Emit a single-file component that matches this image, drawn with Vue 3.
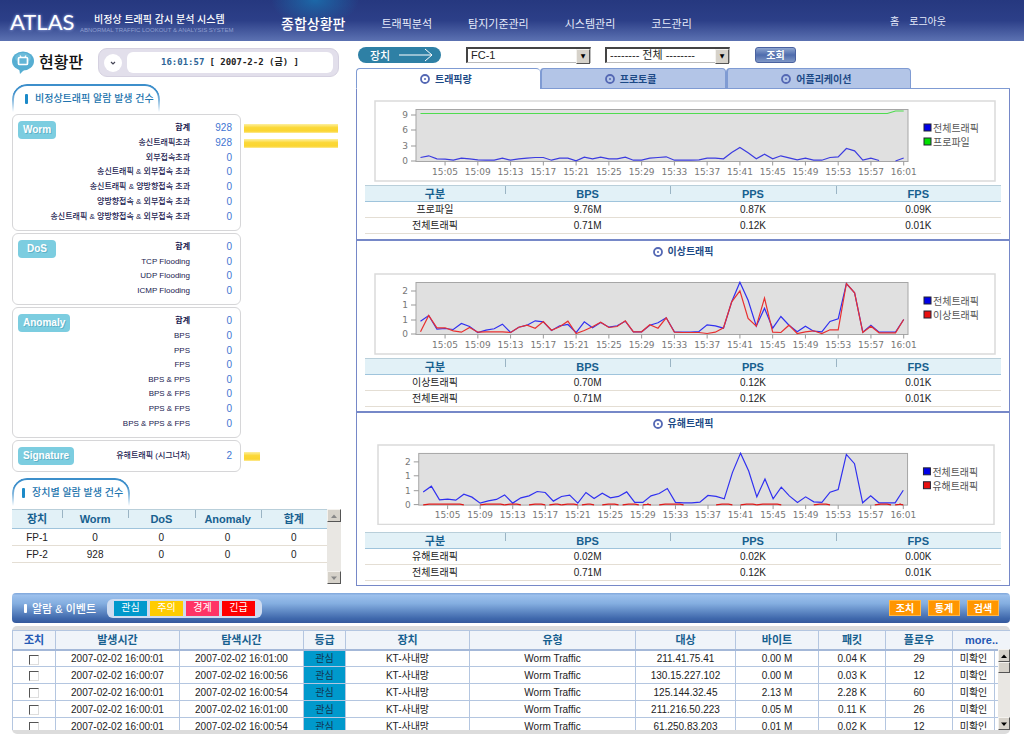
<script setup>
import { ref } from 'vue'

const menu = ['트래픽분석', '탐지기준관리', '시스템관리', '코드관리']
const tabs = ['트래픽량', '프로토콜', '어플리케이션']
const activeTab = ref(0)
const device = ref('FC-1')
const scope = ref('all')

const groups = [
  {
    name: 'Worm',
    size: 'seven',
    rows: [
      ['합계', 928],
      ['송신트래픽초과', 928],
      ['외부접속초과', 0],
      ['송신트래픽 & 외부접속 초과', 0],
      ['송신트래픽 & 양방향접속 초과', 0],
      ['양방향접속 & 외부접속 초과', 0],
      ['송신트래픽 & 양방향접속 & 외부접속 초과', 0]
    ]
  },
  {
    name: 'DoS',
    size: 'four',
    rows: [['합계', 0], ['TCP Flooding', 0], ['UDP Flooding', 0], ['ICMP Flooding', 0]]
  },
  {
    name: 'Anomaly',
    size: 'eight',
    rows: [
      ['합계', 0], ['BPS', 0], ['PPS', 0], ['FPS', 0],
      ['BPS & PPS', 0], ['BPS & FPS', 0], ['PPS & FPS', 0], ['BPS & PPS & FPS', 0]
    ]
  },
  { name: 'Signature', size: 'one', rows: [['유해트래픽 (시그너처)', 2]] }
]
const barWidth = (n) => (n === 0 ? 0 : Math.min(97, 14 + n)) + '%'

const deviceRows = [['FP-1', 0, 0, 0, 0], ['FP-2', 928, 0, 0, 0]]

// Plot area inside the chart's own coordinate system
const X0 = 46.5
const STEP = 8.19
const BASE = 60.5
const toPoints = (values) => values
  .map((h, i) => (h === null ? null : `${(X0 + i * STEP).toFixed(1)},${(BASE - h / 3).toFixed(1)}`))
  .filter(Boolean)
  .join(' ')

const total = [37, 54, 13, 15, 12, 30, 21, 3, 10, 14, 28, 3, 19, 25, 38, 35, 9, 23, 27, 3, 35, 17, 33, 19, 23, 37, 5, 5, 25, 32, 47, 5, 4, 4, 6, 26, 23, 16, 95, 154, 100, 22, 76, 16, 51, 25, 5, 22, 7, 5, 36, 44, 150, 122, 4, 25, 4, 4, 4, 42]
const abnormal = [5, 54, 17, 17, 8, 4, 18, 4, 5, 5, 5, 3, 19, 25, 16, 36, 10, 20, 37, 0, 9, 20, 34, 18, 21, 38, 5, 5, 26, 16, 47, 4, 3, 3, 3, 0, 4, 17, 95, 128, 45, 22, 106, 4, 3, 25, 0, 5, 8, 0, 11, 11, 150, 122, 3, 22, 2, 2, 2, 42]
const low = [9, 14, 5, 4, 1, 7, 5, 2, 1, 1, 7, 1, 5, 7, 9, 9, 1, 7, 7, -1, 10, 5, 10, 5, 5, 10, 1, 1, 7, 9, 11, 1, 1, 1, 2, 7, 7, 5, 24, 39, 23, 5, 19, 5, 14, 8, 2, 7, 1, 1, 9, 11, 36, 29, 1, 7, 0]
const harmfulSpans = [[0, 5], [7, 10], [10, 12], [13, 15], [15.5, 17], [17, 19], [19.5, 21], [22, 24], [24.5, 26.5], [27, 28], [29, 32], [36, 38], [39, 41], [41, 44], [48, 50], [55.5, 57.5], [58, 59]]
const profileLine = `46.5,13.5 ${(X0 + 57 * STEP).toFixed(1)},13.5 ${(X0 + 58 * STEP).toFixed(1)},11 ${(X0 + 59 * STEP).toFixed(1)},11`
const spanPoints = ([a, b]) => {
  const x1 = X0 + a * STEP
  const x2 = X0 + b * STEP
  return `${x1.toFixed(1)},61.2 ${(x1 + 6).toFixed(1)},60.5 ${(x2 - 4).toFixed(1)},60.5 ${x2.toFixed(1)},61.2`
}

const xTicks = ['15:05', '15:09', '15:13', '15:17', '15:21', '15:25', '15:29', '15:33', '15:37', '15:41', '15:45', '15:49', '15:53', '15:57', '16:01']
const tickX = (i) => X0 + (3 + i * 4) * STEP

const fine = [{ t: '2', y: 18 }, { t: '1', y: 32 }, { t: '1', y: 47 }, { t: '0', y: 61 }]
const charts = [
  {
    title: '',
    second: '프로파일', color: '#00e000',
    yTicks: [{ t: '9', y: 15 }, { t: '6', y: 30 }, { t: '3', y: 46 }, { t: '0', y: 61 }],
    lines: [
      { c: '#4fdc4f', p: profileLine },
      { c: '#3c3ce0', p: toPoints(low) },
      { c: '#3c3ce0', p: `${(X0 + 58 * STEP).toFixed(1)},61 ${(X0 + 59 * STEP).toFixed(1)},58` }
    ],
    rows: [['프로파일', '9.76M', '0.87K', '0.09K'], ['전체트래픽', '0.71M', '0.12K', '0.01K']]
  },
  {
    title: '이상트래픽',
    second: '이상트래픽', color: '#e81010',
    yTicks: fine,
    lines: [{ c: '#3030f0', p: toPoints(total) }, { c: '#e83030', p: toPoints(abnormal) }],
    rows: [['이상트래픽', '0.70M', '0.12K', '0.01K'], ['전체트래픽', '0.71M', '0.12K', '0.01K']]
  },
  {
    title: '유해트래픽',
    second: '유해트래픽', color: '#e81010',
    yTicks: fine,
    lines: [{ c: '#3030f0', p: toPoints(total) }, ...harmfulSpans.map((s) => ({ c: '#e01818', p: spanPoints(s) }))],
    rows: [['유해트래픽', '0.02M', '0.02K', '0.00K'], ['전체트래픽', '0.71M', '0.12K', '0.01K']]
  }
]

const levels = [
  { t: '관심', k: 'notice' }, { t: '주의', k: 'caution' }, { t: '경계', k: 'alert' }, { t: '긴급', k: 'urgent' }
]
const eventCols = [43, 124, 124, 42, 124, 166, 100, 83, 67, 67, 42, 16]
const eventHeads = ['조치', '발생시간', '탐색시간', '등급', '장치', '유형', '대상', '바이트', '패킷', '플로우']
const events = [
  ['2007-02-02 16:00:01', '2007-02-02 16:01:00', '211.41.75.41', '0.00 M', '0.04 K', 29],
  ['2007-02-02 16:00:07', '2007-02-02 16:00:56', '130.15.227.102', '0.00 M', '0.03 K', 12],
  ['2007-02-02 16:00:01', '2007-02-02 16:00:54', '125.144.32.45', '2.13 M', '2.28 K', 60],
  ['2007-02-02 16:00:01', '2007-02-02 16:01:00', '211.216.50.223', '0.05 M', '0.11 K', 26],
  ['2007-02-02 16:00:01', '2007-02-02 16:00:54', '61.250.83.203', '0.01 M', '0.02 K', 12]
]
</script>

<template>
  <div class="page">
    <header class="top">
      <a class="logo" href="#">ATLAS</a>
      <div class="tagline">
        <p class="ko">비정상 트래픽 감시 분석 시스템</p>
        <p class="en">ABNORMAL TRAFFIC LOOKOUT &amp; ANALYSIS SYSTEM</p>
      </div>
      <nav class="menu">
        <a class="current" href="#">종합상황판</a>
        <a v-for="m in menu" :key="m" href="#">{{ m }}</a>
      </nav>
      <div class="user">
        <a href="#">홈</a>
        <a href="#">로그아웃</a>
      </div>
    </header>

    <main class="main">
      <section class="left">
        <div class="status">
          <svg class="bubble" viewBox="0 0 22 24" aria-hidden="true">
            <ellipse cx="11" cy="10" rx="11" ry="9.5" fill="#56aed2" />
            <path d="M7 17 L8 23 L14 17 Z" fill="#56aed2" />
            <ellipse cx="11" cy="7" rx="8" ry="5" fill="#7cc5e0" opacity=".6" />
            <rect x="6.5" y="6.5" width="9" height="7" rx="1" fill="#63b5d6" stroke="#fff" stroke-width="1.7" />
            <path d="M8 4.500 L9 6 M14 4.500 L13 6" stroke="#fff" stroke-width="1.2" />
          </svg>
          <h1>현황판</h1>
          <div class="clock">
            <button type="button" class="round" aria-label="열기">
              <svg viewBox="0 0 8 8"><path d="M2 3 L4 5 L6 3" fill="none" stroke="#445" stroke-width="1.2" /></svg>
            </button>
            <p class="time"><b>16:01:57</b><span>[ 2007-2-2 (금) ]</span></p>
          </div>
        </div>

        <h2 class="cap"><span>비정상트래픽 알람 발생 건수</span></h2>
        <div class="groups">
          <div v-for="g in groups" :key="g.name" class="group" :class="g.size">
            <div class="box">
              <strong class="badge">{{ g.name }}</strong>
              <dl>
                <div v-for="r in g.rows" :key="r[0]">
                  <dt :class="{ sum: r[0] === '합계' }">{{ r[0] }}</dt>
                  <dd>{{ r[1] }}</dd>
                </div>
              </dl>
            </div>
            <div class="bars">
              <div v-for="r in g.rows" :key="r[0]">
                <i v-if="r[1]" :style="{ width: barWidth(r[1]) }"></i>
              </div>
            </div>
          </div>
        </div>

        <h2 class="cap second"><span>장치별 알람 발생 건수</span></h2>
        <div class="devices">
          <table class="grid device-table">
            <colgroup><col class="first"><col><col><col><col></colgroup>
            <thead>
              <tr><th>장치</th><th>Worm</th><th>DoS</th><th>Anomaly</th><th>합계</th></tr>
            </thead>
            <tbody>
              <tr v-for="r in deviceRows" :key="r[0]"><td v-for="(c, i) in r" :key="i">{{ c }}</td></tr>
            </tbody>
          </table>
          <div class="scroll">
            <button type="button" aria-label="위로"><svg viewBox="0 0 8 8"><path d="M1 6 L4 2.500 L7 6 Z" fill="#888" /></svg></button>
            <button type="button" aria-label="아래로"><svg viewBox="0 0 8 8"><path d="M1 2.500 L4 6 L7 2.500 Z" fill="#888" /></svg></button>
          </div>
        </div>
      </section>

      <section class="right">
        <form class="filter" @submit.prevent>
          <label class="pill" for="device">장치
            <svg viewBox="0 0 34 14" aria-hidden="true"><path d="M0 7 H33 M26 1 L33 7 L26 13" fill="none" stroke="#fff" /></svg>
          </label>
          <span class="drop">
            <select id="device" v-model="device"><option>FC-1</option></select>
          </span>
          <span class="drop">
            <select v-model="scope" aria-label="범위"><option value="all">-------- 전체 --------</option></select>
          </span>
          <button type="submit" class="query">조회</button>
        </form>

        <div class="tabs" role="tablist">
          <button
            v-for="(t, i) in tabs" :key="t" type="button" role="tab"
            :aria-selected="i === activeTab" :class="{ on: i === activeTab }" @click="activeTab = i"
          >
            <svg class="dot" viewBox="0 0 10 10"><circle cx="5" cy="5" r="4" fill="none" stroke="#5468b4" stroke-width="1.8" /><circle cx="5" cy="5" r="1" fill="#5468b4" /></svg>{{ t }}
          </button>
          <span class="rest"></span>
        </div>

        <div class="panel">
          <article v-for="(c, k) in charts" :key="k" :class="'part part' + k">
            <h3 v-if="c.title">
              <svg class="dot" viewBox="0 0 10 10"><circle cx="5" cy="5" r="4" fill="none" stroke="#5468b4" stroke-width="1.8" /><circle cx="5" cy="5" r="1" fill="#5468b4" /></svg>{{ c.title }}
            </h3>
            <svg class="chart" viewBox="0 0 622 82">
              <rect x="1" y="1" width="620" height="80" fill="#fff" stroke="#dadada" stroke-width="1.5" />
              <rect x="42" y="9.5" width="492" height="52" fill="#e0e0e0" stroke="#a6a6a6" />
              <g stroke="#999">
                <line v-for="(y, i) in c.yTicks" :key="i" x1="37" x2="42" :y1="y.y" :y2="y.y" />
                <line v-for="(t, i) in xTicks" :key="t" :x1="tickX(i)" :x2="tickX(i)" y1="61.5" y2="65.5" />
              </g>
              <g class="tick">
                <text v-for="(y, i) in c.yTicks" :key="i" x="34" :y="y.y + 3" text-anchor="end">{{ y.t }}</text>
                <text v-for="(t, i) in xTicks" :key="t" :x="tickX(i)" y="75" text-anchor="middle">{{ t }}</text>
              </g>
              <polyline v-for="(l, i) in c.lines" :key="i" :points="l.p" fill="none" :stroke="l.c" stroke-width="1.2" />
              <rect x="550" y="24" width="7" height="7" fill="#0000e8" stroke="#223" />
              <rect x="550" y="38" width="7" height="7" :fill="c.color" stroke="#223" />
              <g class="key">
                <text x="559" y="32">전체트래픽</text>
                <text x="559" y="46">{{ c.second }}</text>
              </g>
            </svg>
            <table class="grid stat">
              <colgroup><col class="first"><col><col><col></colgroup>
              <thead><tr><th>구분</th><th>BPS</th><th>PPS</th><th>FPS</th></tr></thead>
              <tbody>
                <tr v-for="r in c.rows" :key="r[0]"><td v-for="(v, i) in r" :key="i">{{ v }}</td></tr>
              </tbody>
            </table>
          </article>
        </div>
      </section>
    </main>

    <section class="events">
      <div class="bar">
        <h2>알람 &amp; 이벤트</h2>
        <ul>
          <li v-for="l in levels" :key="l.k" :class="l.k">{{ l.t }}</li>
        </ul>
        <div class="acts">
          <button type="button">조치</button>
          <button type="button">통계</button>
          <button type="button">검색</button>
        </div>
      </div>
      <div class="list">
        <div class="window">
          <table>
            <colgroup><col v-for="(w, i) in eventCols" :key="i" :style="{ width: w + 'px' }"></colgroup>
            <thead>
              <tr>
                <th v-for="h in eventHeads" :key="h">{{ h }}</th>
                <th colspan="2"><a href="#">more..</a></th>
              </tr>
            </thead>
            <tbody>
              <tr v-for="(e, i) in events" :key="i">
                <td><input type="checkbox" :aria-label="'조치 ' + (i + 1)"></td>
                <td>{{ e[0] }}</td>
                <td>{{ e[1] }}</td>
                <td class="level">관심</td>
                <td>KT-사내망</td>
                <td>Worm Traffic</td>
                <td>{{ e[2] }}</td>
                <td>{{ e[3] }}</td>
                <td>{{ e[4] }}</td>
                <td>{{ e[5] }}</td>
                <td>미확인</td>
                <td></td>
              </tr>
            </tbody>
          </table>
          <div class="scroll over">
            <button type="button" aria-label="위로"><svg viewBox="0 0 8 8"><path d="M1 6 L4 2.500 L7 6 Z" fill="#000" /></svg></button>
            <span class="thumb"></span>
            <button type="button" aria-label="아래로"><svg viewBox="0 0 8 8"><path d="M1 2.500 L4 6 L7 2.500 Z" fill="#000" /></svg></button>
          </div>
        </div>
      </div>
    </section>
  </div>
</template>

<style>
body { margin: 0; background: #fff; }
</style>

<style scoped>
.page {
  font-family: "Liberation Sans", "Noto Sans CJK KR", sans-serif;
  font-size: 10px;
  color: #222;
}
.page * { box-sizing: border-box; }
h1, h2, h3, p, ul, dl, dd { margin: 0; padding: 0; }
ul { list-style: none; }
a { text-decoration: none; color: inherit; }
button { font-family: inherit; padding: 0; margin: 0; cursor: pointer; }
table { border-collapse: collapse; border-spacing: 0; table-layout: fixed; width: 100%; }
th, td { padding: 0; text-align: center; white-space: nowrap; }

.top {
  display: flex;
  align-items: center;
  height: 41px;
  padding: 0 78px 0 10px;
  color: #e6ebfa;
  background:
    radial-gradient(ellipse 44px 26px at 315px 0, #1c68a8, transparent),
    linear-gradient(#26387f, #2c3f88 50%, #5c72b2);
}
.logo {
  width: 70px;
  font: 22px/24px Lato, sans-serif;
  color: #fff;
  padding-top: 3px;
  text-shadow: 0 0 3px #a9b8ee;
}
.tagline { width: 201px; white-space: nowrap; padding-top: 6px; }
.ko { padding-left: 14px; font-size: 10px; line-height: 12px; font-weight: 500; color: #fff; }
.en { font: 6px/8px "Liberation Sans", sans-serif; color: #8f9fd0; }
.menu { display: flex; align-items: center; gap: 36px; font-size: 11px; padding-top: 4px; white-space: nowrap; }
.menu .current { font-size: 14px; font-weight: 500; color: #fff; }
.user { display: flex; gap: 10px; margin-left: auto; }

.main {
  display: grid;
  grid-template-columns: 329px minmax(0, 1fr);
  column-gap: 15px;
  padding: 6px 14px 7px 12px;
}
.left { padding-top: 1px; }
.status { display: flex; align-items: center; height: 29px; }
.bubble { width: 22px; height: 24px; margin-right: 5px; }
h1 { font-size: 16px; line-height: 24px; font-weight: 500; color: #111; width: 59px; }
.clock {
  flex: 1;
  display: flex;
  align-items: center;
  gap: 5px;
  height: 29px;
  padding: 0 5px;
  margin-right: 2px;
  border-radius: 9px;
  background: #e2dfeb;
  border: 1px solid #d5d1e0;
}
.round { width: 18px; height: 18px; border: 0; border-radius: 9px; background: #fff; display: grid; place-items: center; }
.round svg { width: 8px; height: 8px; }
.time {
  flex: 1;
  display: flex;
  justify-content: center;
  gap: 5px;
  height: 21px;
  border-radius: 6px;
  background: #fff;
  font: bold 9px/21px "DejaVu Sans Mono", "Noto Sans CJK KR", monospace;
  color: #222;
}
.time b { color: #2d6496; }

.cap {
  position: relative;
  width: 148px;
  height: 28px;
  margin-top: 7px;
  font-size: 10px;
  line-height: 30px;
  font-weight: 500;
  color: #2173ad;
  white-space: nowrap;
}
.cap::before {
  content: "";
  position: absolute;
  inset: 0;
  border: 2px solid #3d8fcb;
  border-bottom: 0;
  border-radius: 15px 15px 0 0;
  mask-image: linear-gradient(#000 30%, transparent);
}
.cap span { display: flex; align-items: center; gap: 7px; padding-left: 13px; }
.cap span::before { content: ""; width: 3px; height: 10px; border-radius: 1px; background: #1c8ac8; }
.cap.second { width: 118px; margin-top: 6px; }
.cap.second span { padding-left: 10px; }

.groups { display: grid; gap: 2px; margin-top: 2px; }
.group { display: flex; gap: 3px; }
.seven { min-height: 117px; }
.four { min-height: 72px; }
.eight { min-height: 131px; }
.one { min-height: 32px; }
.box { display: flex; width: 229px; padding: 6px 8px 6px 5px; border: 1px solid #d6d6d8; border-radius: 6px; }
.badge {
  align-self: flex-start;
  min-width: 38px;
  height: 18px;
  padding: 0 5px;
  border-radius: 4px;
  background: #7ccde0;
  color: #fff;
  text-align: center;
  font: bold 10px/18px "Liberation Sans", sans-serif;
  text-shadow: 1px 1px 0 #5fb2c8;
}
dl { flex: 1; min-width: 0; display: grid; grid-template-columns: minmax(0, 1fr); grid-auto-rows: 1fr; line-height: 12px; }
dl > div { display: flex; align-items: center; justify-content: flex-end; white-space: nowrap; }
dt { flex: none; font-size: 8px; font-weight: 500; color: #1a1a50; }
dt.sum { font-weight: 700; }
dd { flex: none; width: 42px; text-align: right; font-size: 10px; color: #3f76d2; }
.bars { flex: 1; display: grid; grid-auto-rows: 1fr; padding: 7px 0; }
.bars > div { display: flex; align-items: center; }
.bars i { height: 9px; background: linear-gradient(#fdf0a0, #fbd838 40%, #fbd530 80%, #fdeb9a); }

.devices { display: flex; align-items: flex-start; margin-top: 3px; }
.devices table { flex: 1; }
.device-table .first { width: 50px; }
.grid th {
  position: relative;
  background: #e2f1f7;
  color: #17608f;
  font-weight: 700;
  font-size: 11px;
  border-top: 1px solid #b9cfda;
  border-bottom: 1px solid #9fc4dc;
}
.grid th + th::before {
  content: "";
  position: absolute;
  left: 0;
  top: 0;
  height: 8px;
  border-left: 1px solid #9ab4c4;
}
.grid td { border-bottom: 1px solid #e4ded4; }
.device-table th { height: 19px; line-height: 17px; }
.device-table td { height: 17px; line-height: 15px; }
.scroll {
  display: flex;
  flex-direction: column;
  justify-content: space-between;
  width: 14px;
  min-height: 75px;
  background: #e9e7e3;
}
.scroll button, .thumb {
  display: grid;
  place-items: center;
  height: 13px;
  border: 1px solid;
  border-color: #f4f2ee #555 #555 #f4f2ee;
  background: #d6d2ca;
}
.scroll svg { width: 8px; height: 8px; }

.filter { display: flex; align-items: center; gap: 14px; height: 16px; padding-left: 2px; }
.pill {
  display: flex;
  align-items: center;
  gap: 9px;
  width: 83px;
  height: 16px;
  margin-right: 11px;
  padding-left: 12px;
  border-radius: 8px;
  background: #2e80a5;
  color: #fff;
  font-size: 11px;
  font-weight: 500;
}
.pill svg { width: 34px; height: 14px; }
.drop { position: relative; display: block; width: 125px; height: 16px; }
.drop::after {
  content: "▼";
  position: absolute;
  right: 1px;
  top: 2px;
  width: 12px;
  height: 13px;
  border: 1px solid;
  border-color: #f4f2ee #555 #555 #f4f2ee;
  background: #d6d2ca;
  font: 6px/11px "DejaVu Sans", sans-serif;
  text-align: center;
  color: #000;
  pointer-events: none;
}
.drop select {
  appearance: none;
  display: block;
  width: 100%;
  height: 16px;
  padding: 0 3px;
  border: 1px solid;
  border-color: #444 #bbb #bbb #444;
  border-width: 2px 1px 1px 2px;
  border-radius: 0;
  background: #fff;
  font: 11px/13px "Liberation Sans", "Noto Sans CJK KR", sans-serif;
  color: #222;
}
.query {
  width: 41px;
  height: 16px;
  margin-left: 11px;
  border: 1px solid #4a62a0;
  border-radius: 3px;
  background: linear-gradient(#8fa6d0, #4f6cad 50%, #7f97c6);
  color: #fff;
  font-weight: 700;
  font-size: 10px;
  line-height: 13px;
}

.tabs { display: flex; height: 21px; margin-top: 5px; }
.tabs button {
  flex: 9;
  display: flex;
  align-items: center;
  justify-content: center;
  gap: 5px;
  padding-right: 5px;
  border: 1px solid #7f9bd3;
  border-left-width: 2px;
  border-radius: 4px 4px 0 0;
  background: #b3c5e7;
  color: #1d4a86;
  font-size: 10px;
  font-weight: 700;
}
.tabs .on { background: #fff; border-bottom-color: #fff; border-right: 0; border-left-width: 1px; }
.rest { flex: 5; border-bottom: 1px solid #7f9bd3; }
.dot { width: 10px; height: 10px; }
.panel { border: 1px solid #7688c8; border-top: 0; }
.part { padding: 0 8px 4px; border-bottom: 2px solid #7688c8; }
.part0 { padding-top: 11px; padding-bottom: 5px; }
.part2 { border-bottom: 0; }
h3 {
  display: flex;
  align-items: center;
  justify-content: center;
  gap: 5px;
  height: 22px;
  margin-bottom: 10px;
  font-size: 10px;
  line-height: 20px;
  color: #1d4a86;
}
.chart { display: block; width: calc(100% - 14px); margin: 0 5px 3px 9px; }
.part2 h3 { margin-bottom: 9px; }
.part2 .chart { width: calc(100% - 18px); margin-left: 12px; margin-bottom: 7px; }
.tick { font: 9px "DejaVu Sans", sans-serif; fill: #777; }
.key { font: 10px "Noto Sans CJK KR", sans-serif; fill: #555; }
.stat .first { width: 22%; }
.stat th { height: 16px; line-height: 14px; }
.stat td { height: 16px; line-height: 14px; }

.events { padding: 0 14px 0 12px; }
.bar {
  display: flex;
  align-items: center;
  height: 30px;
  padding: 0 11px 0 12px;
  border-radius: 4px;
  background: linear-gradient(#7fa6da, #9cc0ec 8%, #84aee0 35%, #3f68ac 85%, #35599c);
}
.bar h2 { display: flex; align-items: center; gap: 5px; width: 83px; font-size: 11px; color: #fff; font-weight: 500; white-space: nowrap; }
.bar h2::before { content: ""; width: 3px; height: 9px; border-radius: 1px; background: #fff; }
.bar ul { display: flex; gap: 3px; padding: 2px 7px; border-radius: 6px; background: #cfdcf0; }
.bar li { width: 33px; height: 15px; line-height: 14px; text-align: center; color: #fff; }
.notice { background: #09c; }
.caution { background: #fc0; }
.alert { background: #f36; }
.urgent { background: #f00; }
.acts { display: flex; gap: 7px; margin-left: auto; }
.acts button {
  width: 32px;
  height: 16px;
  border: 1px solid #ffb84a;
  background: #ff9600;
  color: #fff;
  font-size: 10px;
  font-weight: 700;
  line-height: 13px;
}
.list { margin-top: 3px; padding: 4px 0; border-radius: 5px; background: #dcdcdc; }
.window { position: relative; height: 100px; overflow: hidden; background: #fff; }
.window th {
  height: 19px;
  line-height: 16px;
  border: 1px solid #b4c6e0;
  border-bottom: 2px solid #a4b8d8;
  background: #f0f4f9;
  color: #17608f;
  font-size: 11px;
}
.window th:first-child, .window th a { color: #2458b4; }
.window td { height: 17px; line-height: 15px; border: 1px solid #b4c6e0; }
.window .level { background: #09c; color: #123450; }
.window input {
  appearance: none;
  display: block;
  width: 10px;
  height: 10px;
  margin: 2px auto 0;
  border: 1px solid;
  border-color: #555 #ddd #ddd #555;
  background: #fff;
}
.over { position: absolute; right: 0; top: 19px; bottom: 0; width: 12px; justify-content: flex-start; }
.over .thumb { height: 11px; margin-bottom: auto; }
</style>
